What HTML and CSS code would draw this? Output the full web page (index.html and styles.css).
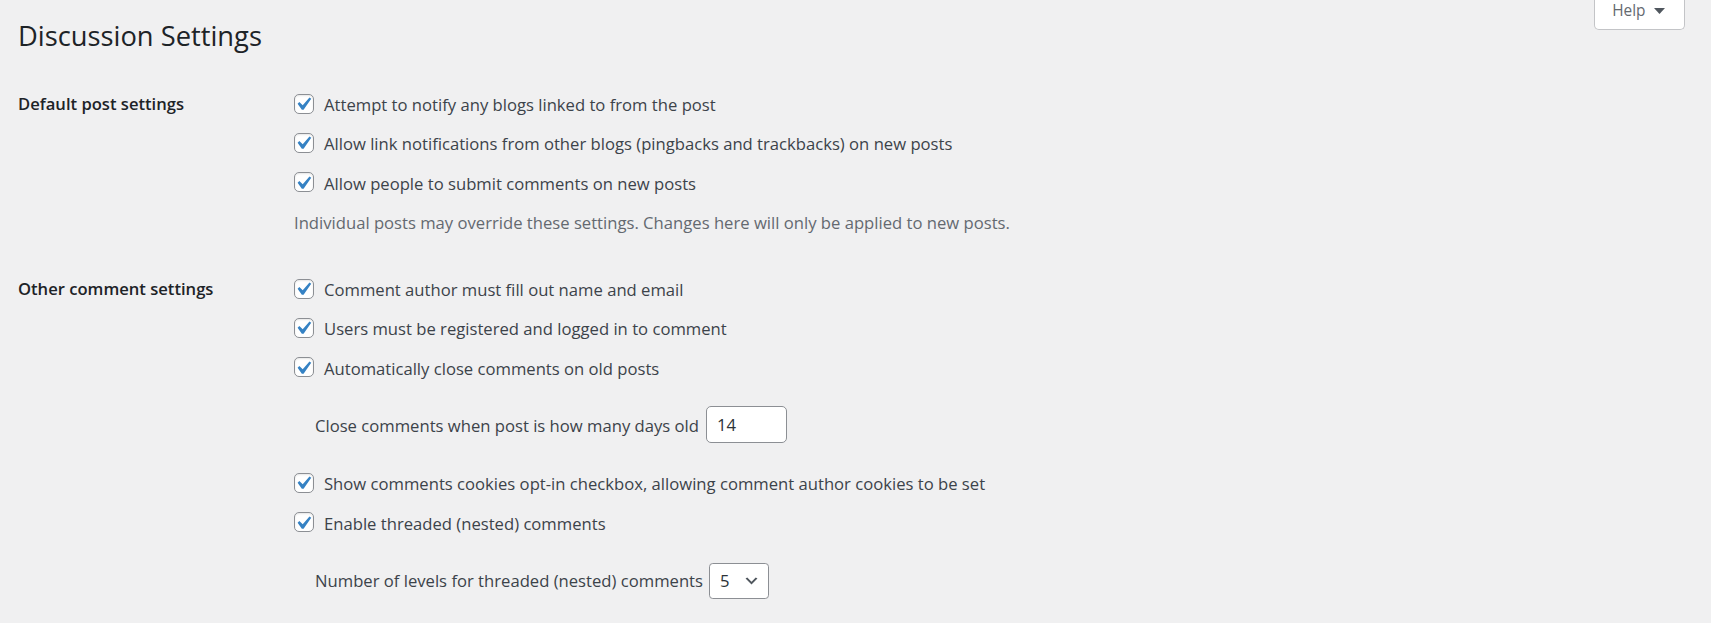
FILE: index.html
```html
<!DOCTYPE html>
<html lang="en">
<head>
<meta charset="utf-8">
<title>Discussion Settings</title>
<link rel="stylesheet" href="styles.css">
</head>
<body>
<div class="wrap">
  <div class="top">
    <h1 class="title">Discussion Settings</h1>
    <div class="help-tab">
      <button class="help-btn" type="button"><span class="help-label">Help</span><svg class="help-arrow" viewBox="0 0 11 6" aria-hidden="true"><path d="M0 0h11L5.5 6z"/></svg></button>
    </div>
  </div>

  <form class="settings">
    <div class="section sec-default">
      <div class="th">Default post settings</div>
      <div class="td">
        <label class="opt"><span class="cb"><svg viewBox="0 0 20 20"><path d="M14.83 4.89l1.34.94-5.81 8.38H9.02L5.78 9.67l1.34-1.25 2.57 2.4z"/></svg></span><span class="txt">Attempt to notify any blogs linked to from the post</span></label>
        <label class="opt"><span class="cb"><svg viewBox="0 0 20 20"><path d="M14.83 4.89l1.34.94-5.81 8.38H9.02L5.78 9.67l1.34-1.25 2.57 2.4z"/></svg></span><span class="txt">Allow link notifications from other blogs (pingbacks and trackbacks) on new posts</span></label>
        <label class="opt"><span class="cb"><svg viewBox="0 0 20 20"><path d="M14.83 4.89l1.34.94-5.81 8.38H9.02L5.78 9.67l1.34-1.25 2.57 2.4z"/></svg></span><span class="txt">Allow people to submit comments on new posts</span></label>
        <p class="description">Individual posts may override these settings. Changes here will only be applied to new posts.</p>
      </div>
    </div>

    <div class="section sec-other">
      <div class="th">Other comment settings</div>
      <div class="td">
        <label class="opt"><span class="cb"><svg viewBox="0 0 20 20"><path d="M14.83 4.89l1.34.94-5.81 8.38H9.02L5.78 9.67l1.34-1.25 2.57 2.4z"/></svg></span><span class="txt">Comment author must fill out name and email</span></label>
        <label class="opt"><span class="cb"><svg viewBox="0 0 20 20"><path d="M14.83 4.89l1.34.94-5.81 8.38H9.02L5.78 9.67l1.34-1.25 2.57 2.4z"/></svg></span><span class="txt">Users must be registered and logged in to comment</span></label>
        <label class="opt"><span class="cb"><svg viewBox="0 0 20 20"><path d="M14.83 4.89l1.34.94-5.81 8.38H9.02L5.78 9.67l1.34-1.25 2.57 2.4z"/></svg></span><span class="txt">Automatically close comments on old posts</span></label>
        <div class="sub sub-days">
          <label class="sub-label" for="days">Close comments when post is how many days old</label>
          <input class="num" id="days" type="text" value="14">
        </div>
        <label class="opt"><span class="cb"><svg viewBox="0 0 20 20"><path d="M14.83 4.89l1.34.94-5.81 8.38H9.02L5.78 9.67l1.34-1.25 2.57 2.4z"/></svg></span><span class="txt">Show comments cookies opt-in checkbox, allowing comment author cookies to be set</span></label>
        <label class="opt"><span class="cb"><svg viewBox="0 0 20 20"><path d="M14.83 4.89l1.34.94-5.81 8.38H9.02L5.78 9.67l1.34-1.25 2.57 2.4z"/></svg></span><span class="txt">Enable threaded (nested) comments</span></label>
        <div class="sub sub-levels">
          <label class="sub-label" for="levels">Number of levels for threaded (nested) comments</label>
          <span class="select-wrap">
            <select class="sel" id="levels">
              <option>2</option><option>3</option><option>4</option><option selected>5</option><option>6</option><option>7</option><option>8</option><option>9</option><option>10</option>
            </select>
            <svg class="chev" viewBox="0 0 20 20" aria-hidden="true"><path d="M5 6l5 5 5-5 2 1-7 7-7-7 2-1z"/></svg>
          </span>
        </div>
      </div>
    </div>
  </form>
</div>
</body>
</html>
```

FILE: styles.css
```css
* { box-sizing: border-box; }

html, body {
  margin: 0;
  padding: 0;
}

body {
  background: #f0f0f1;
  color: #3c434a;
  font-family: "Open Sans", "Noto Sans", sans-serif;
  font-size: 16.65px;
  line-height: 24.5px;
  overflow: hidden;
}

.wrap {
  padding: 0 26px 0 18px;
}

.top {
  display: flex;
  justify-content: space-between;
  align-items: flex-start;
}

.title {
  margin: 0;
  padding-top: 18px;
  font-size: 27.3px;
  line-height: 35px;
  font-weight: 400;
  color: #1d2327;
}

.help-tab {
  background: #fff;
  border: 1px solid #c3c4c7;
  border-top: none;
  border-radius: 0 0 5px 5px;
}

.help-btn {
  display: flex;
  align-items: center;
  height: 29px;
  padding: 1px 19px 8px 17.6px;
  margin: 0;
  border: 0;
  background: transparent;
  font-family: "Open Sans", "Noto Sans", sans-serif;
  font-size: 15.4px;
  line-height: 20px;
  color: #646970;
}

.help-label {
  display: block;
  height: 20px;
}

.help-arrow {
  display: block;
  width: 11px;
  height: 6px;
  margin-left: 8.5px;
  fill: #50575e;
}

.settings {
  margin-top: 13.6px;
}

.section {
  display: flex;
}

.th {
  flex: none;
  width: 276px;
  padding-top: 26.7px;
  font-size: 16.6px;
  line-height: 22.75px;
  font-weight: 600;
  color: #1d2327;
}

.td {
  flex: 1;
  display: flex;
  flex-direction: column;
  align-items: flex-start;
  padding: 18.75px 0 15.8px;
}

.sec-other .td {
  padding-bottom: 18.75px;
}

.opt {
  display: flex;
  align-items: center;
  height: 24.5px;
  margin: 6.125px 0 8.75px;
}

.cb {
  flex: none;
  display: block;
  width: 20px;
  height: 20px;
  border: 1px solid #8c8f94;
  border-radius: 5px;
  background: #fff;
  box-shadow: inset 0 1px 2px rgba(0, 0, 0, 0.1);
}

.cb svg {
  display: block;
  width: 26.25px;
  height: 26.25px;
  margin: -3.75px 0 0 -5px;
  fill: #3582c4;
}

.txt {
  margin-left: 10px;
  padding-top: 3px;
  white-space: nowrap;
}

.description {
  margin: 7.8px 0 0;
  color: #646970;
}

.sub {
  display: flex;
  align-items: center;
  margin-left: 21px;
}

.sub-days {
  height: 37.5px;
  margin-top: 17.5px;
  margin-bottom: 21.1px;
}

.sub-days .sub-label {
  padding-top: 4px;
}

.sub-levels {
  height: 36px;
  margin-top: 19.9px;
}

.sub-levels .sub-label {
  padding-top: 1px;
}

.sub-label {
  white-space: nowrap;
}

.num {
  width: 81.25px;
  height: 37.5px;
  margin: 0 0 0 7px;
  padding: 0 10px;
  border: 1px solid #8c8f94;
  border-radius: 5px;
  background: #fff;
  color: #2c3338;
  font-family: "Open Sans", "Noto Sans", sans-serif;
  font-size: 16.65px;
  line-height: 35px;
  outline: none;
}

.select-wrap {
  position: relative;
  display: block;
  margin-left: 6px;
}

.sel {
  display: block;
  width: 60.4px;
  height: 36px;
  margin: 0;
  padding: 0 30px 0 10px;
  border: 1px solid #8c8f94;
  border-radius: 3.75px;
  background: #fff;
  color: #2c3338;
  font-family: "Open Sans", "Noto Sans", sans-serif;
  font-size: 16.65px;
  line-height: 34px;
  -webkit-appearance: none;
  appearance: none;
  outline: none;
}

.chev {
  position: absolute;
  right: 9px;
  top: 50%;
  width: 17px;
  height: 17px;
  transform: translateY(-50%);
  fill: #50575e;
  pointer-events: none;
}
```
